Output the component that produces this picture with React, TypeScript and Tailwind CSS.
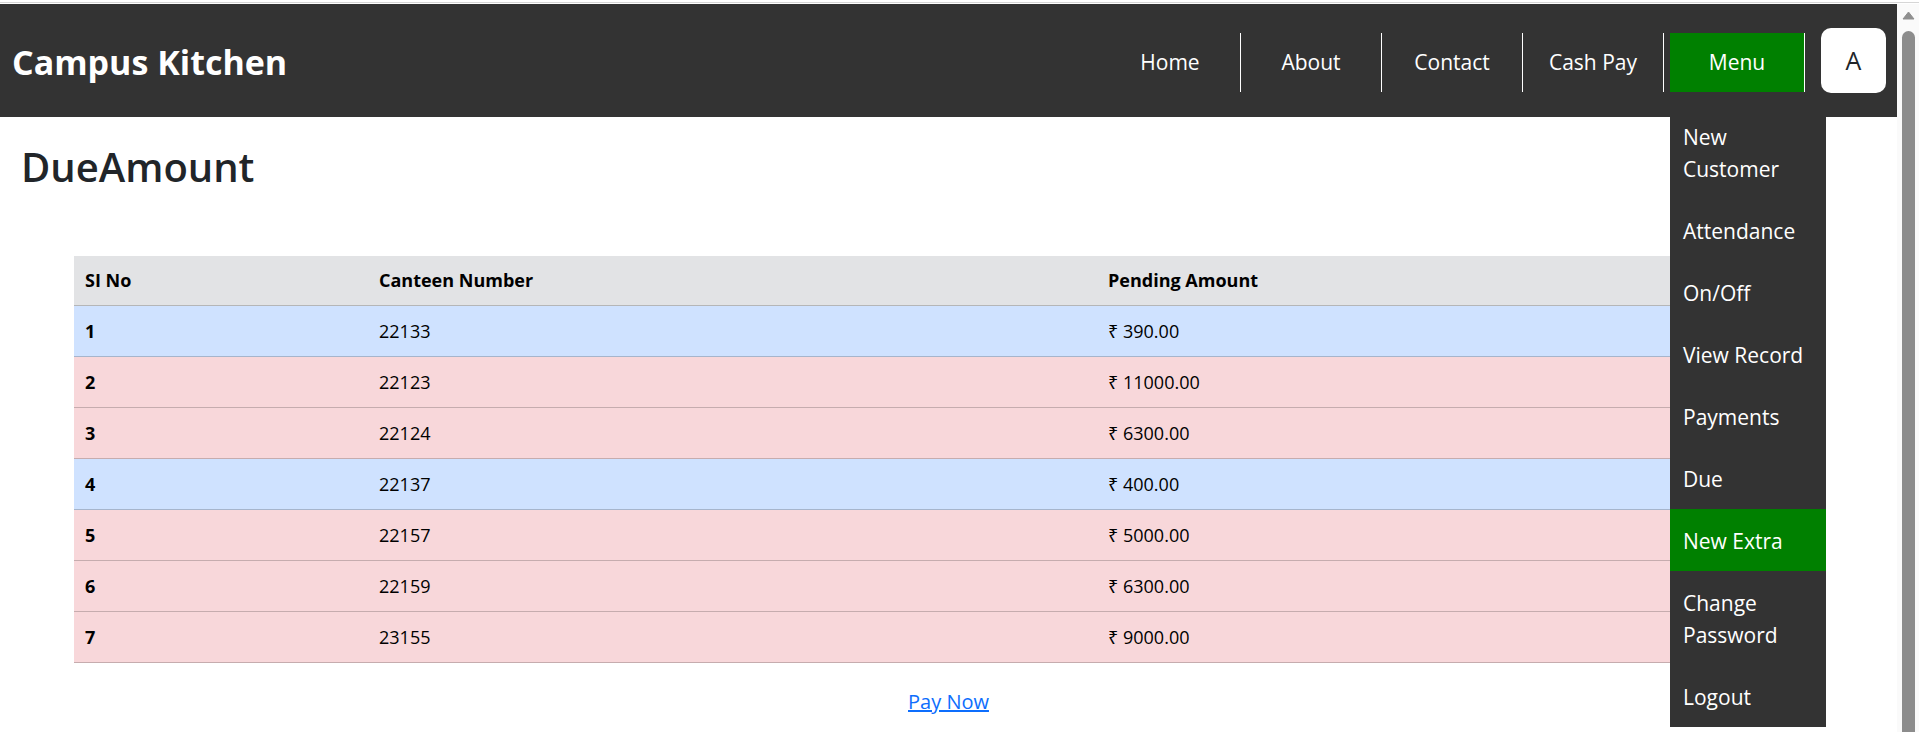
const navLinks = ['Home', 'About', 'Contact', 'Cash Pay'];

const menuItems = [
  'New Customer',
  'Attendance',
  'On/Off',
  'View Record',
  'Payments',
  'Due',
  'New Extra',
  'Change Password',
  'Logout'
];

const dues = [
  { no: 1, canteen: '22133', amount: '390.00', paid: true },
  { no: 2, canteen: '22123', amount: '11000.00', paid: false },
  { no: 3, canteen: '22124', amount: '6300.00', paid: false },
  { no: 4, canteen: '22137', amount: '400.00', paid: true },
  { no: 5, canteen: '22157', amount: '5000.00', paid: false },
  { no: 6, canteen: '22159', amount: '6300.00', paid: false },
  { no: 7, canteen: '23155', amount: '9000.00', paid: false }
];

function Navbar() {
  return (
    <nav className="relative z-10 flex h-[113px] shrink-0 items-center justify-between bg-[#333333] pl-[12px] pr-[11px] pt-[3px]">
      <span className="text-[34px] font-bold leading-none text-white">Campus Kitchen</span>
      <div className="flex items-center">
        <ul className="flex items-center">
          {navLinks.map((link) => (
            <li
              key={link}
              className="flex h-[59px] w-[141px] items-center justify-center border-r border-white pt-[2px] text-[21px] text-white"
            >
              {link}
            </li>
          ))}
          <li className="relative h-[59px] border-r border-white pl-[6px]">
            <a className="flex h-full w-[134px] items-center justify-center bg-[#008000] pt-[2px] text-[21px] text-white">
              Menu
            </a>
            {/* Dropdown */}
            <ul className="absolute left-[6px] top-[72px] w-[156px] bg-[#333333]">
              {menuItems.map((item) => (
                <li
                  key={item}
                  className={
                    item === 'New Extra'
                      ? 'bg-[#008000] px-[13px] pt-[16px] pb-[14px] text-[21px] leading-[32px] text-white'
                      : 'px-[13px] pt-[16px] pb-[14px] text-[21px] leading-[32px] text-white'
                  }
                >
                  {item}
                </li>
              ))}
            </ul>
          </li>
        </ul>
        <div className="-mt-[3px] ml-[16px] flex h-[65px] w-[65px] items-center justify-center rounded-[10px] bg-white text-[25px] text-[#212529]">
          A
        </div>
      </div>
    </nav>
  );
}

function DueTable() {
  return (
    <div className="px-[74px] mt-[65px]">
      <table className="w-full table-fixed border-separate border-spacing-0 text-[18px] text-black">
        <colgroup>
          <col className="w-[294px]" />
          <col className="w-[729px]" />
          <col />
        </colgroup>
        <thead>
          <tr className="bg-[#e2e3e5]">
            <th className="border-b border-[#b5b6b7] px-[11px] py-[12px] text-left font-bold leading-[25px]">SI No</th>
            <th className="border-b border-[#b5b6b7] px-[11px] py-[12px] text-left font-bold leading-[25px]">Canteen Number</th>
            <th className="border-b border-[#b5b6b7] px-[11px] py-[12px] text-left font-bold leading-[25px]">Pending Amount</th>
          </tr>
        </thead>
        <tbody>
          {dues.map((row) => {
            const cell = row.paid
              ? 'bg-[#cfe2ff] border-b border-[#a6b5cc] px-[11px] py-[12px] leading-[26px]'
              : 'bg-[#f8d7da] border-b border-[#c6acae] px-[11px] py-[12px] leading-[26px]';
            return (
              <tr key={row.no}>
                <td className={cell + ' font-bold'}>{row.no}</td>
                <td className={cell}>{row.canteen}</td>
                <td className={cell}>₹ {row.amount}</td>
              </tr>
            );
          })}
        </tbody>
      </table>
    </div>
  );
}

function Scrollbar() {
  return (
    <div className="flex w-[22px] shrink-0 flex-col items-center bg-[#fafafa] pt-[7px]">
      <svg width="13" height="9" viewBox="0 0 13 9">
        <path d="M6.5 1 L12 8 L1 8 Z" fill="#8f8f8f" stroke="#8f8f8f" strokeLinejoin="round" />
      </svg>
      <div className="mt-[11px] w-[13px] flex-1 rounded-t-full bg-[#8c8c8c]" />
    </div>
  );
}

export default function App() {
  return (
    <div className="flex h-[732px] w-full flex-col overflow-hidden bg-white font-[family-name:'Open_Sans','Noto_Sans',sans-serif] text-[#212529]">
      <div className="h-[4px] shrink-0 pt-[2px]">
        <div className="h-px bg-[#d6d6d6]" />
      </div>
      <div className="flex min-h-0 flex-1">
        <main className="flex min-w-0 flex-1 flex-col">
          <Navbar />
          <h1 className="mt-[26px] pl-[21px] text-[40px] font-semibold leading-[48px]">DueAmount</h1>
          <DueTable />
          <div className="mt-[24px] text-center">
            <a href="#" className="text-[20px] leading-[30px] text-[#0d6efd] underline">
              Pay Now
            </a>
          </div>
        </main>
        <Scrollbar />
      </div>
    </div>
  );
}
